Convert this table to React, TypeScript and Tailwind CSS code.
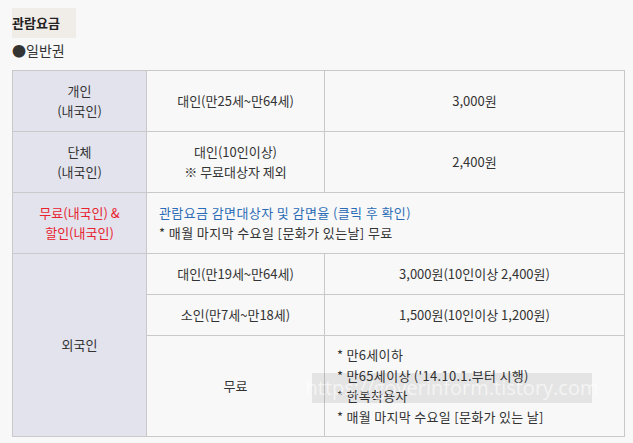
import React from 'react';

const cell = 'border border-[#c9c9c9] text-center align-middle';
const head = `${cell} bg-[#e2e3ec]`;

const App: React.FC = () => {
  return (
    <div className="relative min-h-[443px] w-[633px] bg-[#f8f8f8] pl-3 pt-2 text-[13px] leading-5 text-[#333] font-['Noto_Sans_CJK_KR',sans-serif]">
      <div className="inline-flex h-[30px] items-center bg-[#f0ece8] pr-4 font-bold text-[#222]">관람요금</div>
      <div className="mt-[2px] text-[14px] text-[#333]">●일반권</div>

      <table className="mt-[10px] w-[612px] table-fixed border-collapse">
        <colgroup>
          <col className="w-[134px]" />
          <col className="w-[178px]" />
          <col className="w-[300px]" />
        </colgroup>
        <tbody>
          <tr className="h-[61px]">
            <td className={head}>개인<br />(내국인)</td>
            <td className={cell}>대인(만25세~만64세)</td>
            <td className={cell}>3,000원</td>
          </tr>
          <tr className="h-[61px]">
            <td className={head}>단체<br />(내국인)</td>
            <td className={cell}>대인(10인이상)<br />※ 무료대상자 제외</td>
            <td className={cell}>2,400원</td>
          </tr>
          <tr className="h-[61px]">
            <td className={`${head} text-[#e8222f]`}>무료(내국인) &amp;<br />할인(내국인)</td>
            <td className={`${cell} px-3 text-left tracking-[0.4px]`} colSpan={2}>
              <span className="text-[#2b6cb6]">관람요금 감면대상자 및 감면율 (클릭 후 확인)</span>
              <br />* 매월 마지막 수요일 [문화가 있는날] 무료
            </td>
          </tr>
          <tr className="h-[41px]">
            <td className={head} rowSpan={3}>외국인</td>
            <td className={cell}>대인(만19세~만64세)</td>
            <td className={cell}>3,000원(10인이상 2,400원)</td>
          </tr>
          <tr className="h-[41px]">
            <td className={cell}>소인(만7세~만18세)</td>
            <td className={cell}>1,500원(10인이상 1,200원)</td>
          </tr>
          <tr className="h-[101px]">
            <td className={cell}>무료</td>
            <td className={`${cell} px-3 text-left leading-[20.5px] tracking-[0.3px]`}>
              * 만6세이하<br />
              * 만65세이상 ('14.10.1.부터 시행)<br />
              * 한복착용자<br />
              * 매월 마지막 수요일 [문화가 있는 날]
            </td>
          </tr>
        </tbody>
      </table>

      <div className="pointer-events-none absolute left-[312px] top-[373px] flex h-[30px] w-[280px] items-center justify-center bg-black/[0.08] text-[20px] text-white/60 font-['Open_Sans',sans-serif]">
        https://goverinform.tistory.com
      </div>
    </div>
  );
};

export default App;
